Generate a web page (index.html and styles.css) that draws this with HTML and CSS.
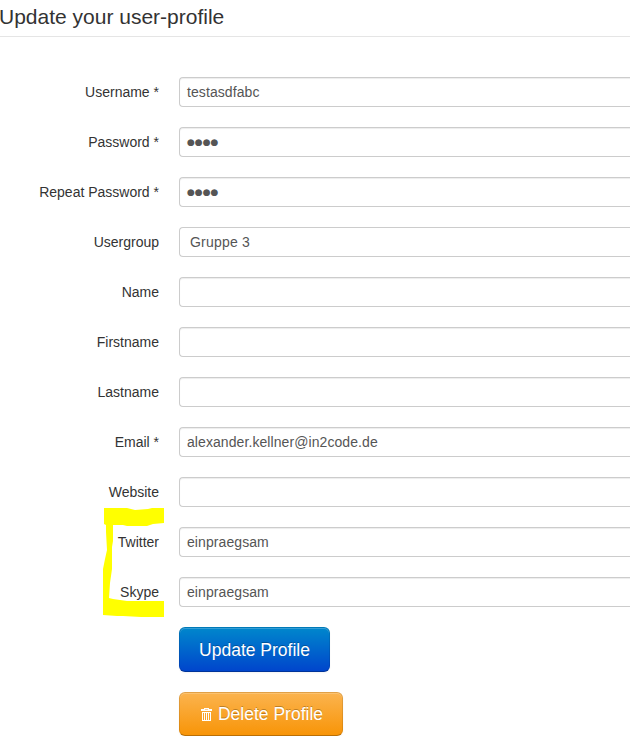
FILE: index.html
```html
<!DOCTYPE html>
<html lang="en">
<head>
<meta charset="utf-8">
<title>Update your user-profile</title>
<link rel="stylesheet" href="styles.css">
</head>
<body>
<form class="profile">
  <h1 class="legend">Update your user-profile</h1>
  <div class="rows">
    <div class="row"><label class="label">Username *</label><div class="field">testasdfabc</div></div>
    <div class="row"><label class="label">Password *</label><div class="field dots">●●●●</div></div>
    <div class="row"><label class="label">Repeat Password *</label><div class="field dots">●●●●</div></div>
    <div class="row"><label class="label">Usergroup</label><div class="field select">Gruppe 3</div></div>
    <div class="row"><label class="label">Name</label><div class="field"></div></div>
    <div class="row"><label class="label">Firstname</label><div class="field"></div></div>
    <div class="row"><label class="label">Lastname</label><div class="field"></div></div>
    <div class="row"><label class="label">Email *</label><div class="field">alexander.kellner@in2code.de</div></div>
    <div class="row"><label class="label">Website</label><div class="field"></div></div>
    <div class="row"><label class="label">Twitter</label><div class="field">einpraegsam</div></div>
    <div class="row"><label class="label">Skype</label><div class="field">einpraegsam</div></div>
    <svg class="marker" width="62" height="112" viewBox="0 0 62 112"><path fill="#ff0" d="M1 1 H24 L32 3 L45 2 L49 1 H61 V16 L50 17 L44 19 L24 19 L20 18 L10 18 V34 L9 40 V62 L7 76 L6 91 L10 92 L17 93 L24 94 L61 94 V110 H38 L20 109 L14 109 L0 108 V62 L2 52 L4 43 L3 25 L3 18 L1 17 Z"/></svg>
  </div>
  <div class="actions">
    <button type="button" class="btn primary">Update Profile</button>
    <button type="button" class="btn warning"><svg class="trash" width="11" height="13" viewBox="0 0 11 13"><path fill="#fff" fill-rule="evenodd" d="M3 0H8V1H11V3H0V1H3ZM4 1V1.6H7V1ZM1 4H10V13H1ZM2 5V12H3V5ZM4 5V12H5V5ZM6 5V12H7V5ZM8 5V12H9V5Z"/></svg>Delete Profile</button>
  </div>
</form>
</body>
</html>
```
FILE: styles.css
```css
body {
  margin: 0;
  background: #fff;
  color: #333;
  font: 14px/20px "Liberation Sans", Arial, sans-serif;
  overflow: hidden;
}
.legend {
  box-sizing: border-box;
  height: 37px;
  margin: 0 0 40px;
  padding-bottom: 3px;
  border-bottom: 1px solid #e5e5e5;
  font-size: 21px;
  font-weight: normal;
  line-height: 33px;
  text-indent: -1px;
}
.rows {
  position: relative;
  display: flex;
  flex-direction: column;
  gap: 20px;
}
.row {
  display: grid;
  grid-template-columns: 159px 471px;
  column-gap: 20px;
}
.label {
  padding-top: 5px;
  text-align: right;
}
.field {
  box-sizing: border-box;
  height: 30px;
  padding: 4px 7px;
  border: 1px solid #ccc;
  border-right: 0;
  border-radius: 4px 0 0 4px;
  box-shadow: inset 0 1px 1px rgba(0, 0, 0, 0.075);
  color: #555;
  letter-spacing: 0.08px;
}
.select {
  padding-left: 10px;
  box-shadow: none;
  letter-spacing: 0.2px;
}
.dots {
  font-family: "DejaVu Sans", sans-serif;
  font-size: 9px;
  letter-spacing: 0;
}
.marker {
  position: absolute;
  left: 103px;
  top: 430px;
}
.actions {
  display: flex;
  flex-direction: column;
  align-items: flex-start;
  gap: 20px;
  padding: 20px 0 0 179px;
}
.btn {
  box-sizing: border-box;
  display: flex;
  align-items: center;
  justify-content: center;
  height: 45px;
  padding: 0;
  border: 1px solid;
  border-radius: 6px;
  color: #fff;
  font: 17.5px/20px "Liberation Sans", Arial, sans-serif;
  white-space: nowrap;
  box-shadow: inset 0 1px 0 rgba(255, 255, 255, 0.2), 0 1px 2px rgba(0, 0, 0, 0.05);
  text-shadow: 0 -1px 0 rgba(0, 0, 0, 0.25);
}
.primary {
  width: 151px;
  background: linear-gradient(#08c, #04c) border-box;
  border-color: rgba(0, 0, 0, 0.1) rgba(0, 0, 0, 0.1) rgba(0, 0, 0, 0.25);
}
.warning {
  width: 164px;
  height: 44px;
  padding-left: 2px;
  background: linear-gradient(#fbb450, #f89406) border-box;
  border-color: rgba(0, 0, 0, 0.1) rgba(0, 0, 0, 0.1) rgba(0, 0, 0, 0.25);
}
.trash {
  margin: 1px 6px 0 0;
}
```
